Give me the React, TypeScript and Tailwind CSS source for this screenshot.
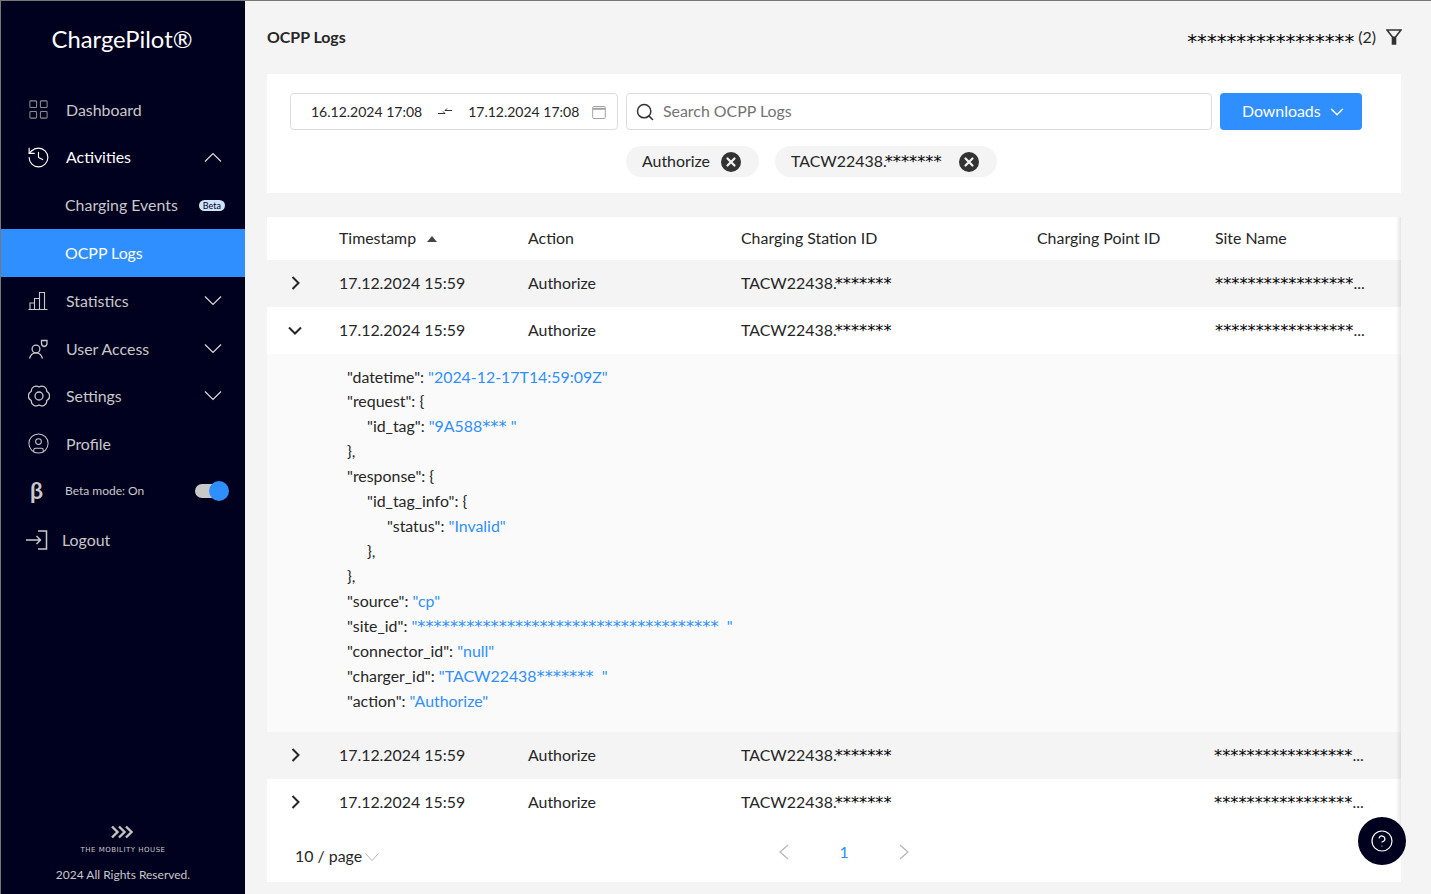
import { ChevronDown, CircleHelp, CircleUser, History, LayoutGrid, Search } from 'lucide-react';
import type { ReactNode } from 'react';

function Stars({ count, className }: { count: number; className?: string }) {
  return <span className={`text-[16.300px] leading-[0] text-black [font-family:'DejaVu_Sans',sans-serif] ${className ?? ''}`}>{'*'.repeat(count)}</span>;
}

function BlueStars({ count }: { count: number }) {
  return <span className="text-[16.300px] leading-[0] [font-family:'DejaVu_Sans',sans-serif]">{'*'.repeat(count)}</span>;
}

function MenuArrow({ up }: { up?: boolean }) {
  return (
    <svg viewBox="0 0 18 10" className="h-[10px] w-[18px]" fill="none" stroke="#dcdcdc" strokeWidth="1.200">
      <path d={up ? 'M1 9.500l8-8 8 8' : 'M1 .500l8 8 8-8'} />
    </svg>
  );
}

function PageArrow({ right }: { right?: boolean }) {
  return (
    <svg viewBox="0 0 10 16" className="h-4 w-[10px]" fill="none" stroke="#b5b5b5" strokeWidth="1.200">
      <path d={right ? 'M1 1l8 7-8 7' : 'M9 1L1 8l8 7'} />
    </svg>
  );
}

function RowArrow({ open }: { open?: boolean }) {
  return open ? (
    <svg viewBox="0 0 14 9" className="h-[9px] w-[14px]" fill="none" stroke="#262626" strokeWidth="2">
      <path d="M1 1.500l6 6 6-6" />
    </svg>
  ) : (
    <svg viewBox="0 0 9 14" className="h-[14px] w-[9px]" fill="none" stroke="#262626" strokeWidth="2">
      <path d="M1.500 1l6 6-6 6" />
    </svg>
  );
}

function BarsIcon() {
  return (
    <svg viewBox="0 0 20 20" className="size-5" fill="none" stroke="currentColor" strokeWidth="1.100">
      <path d="M0.500 18.500h19M2 18v-6h4.500M6.500 18V7.500h5V18M11.500 18V1.500h5V18" />
    </svg>
  );
}

function UserKeyIcon() {
  return (
    <svg viewBox="0 0 20 20" className="size-5" fill="none" stroke="currentColor" strokeWidth="1.300">
      <circle cx="8" cy="10" r="3.900" />
      <path d="M1.500 19.500c1-3.500 3.500-5.600 6.500-5.600s5.500 2.100 6.500 5.600" />
      <path d="M13.500 1.500h5.500v2.700c0 1.900-1.200 3-2.800 3.300-1.600-.3-2.700-1.400-2.700-3.300z" />
    </svg>
  );
}

function GearIcon() {
  return (
    <svg viewBox="0 0 22 22" className="size-[22px]" fill="none" stroke="currentColor" strokeWidth="1.300">
      <circle cx="11" cy="11" r="4" />
      <path d="M11 2A5 5 0 0 1 18.800 6.500A5 5 0 0 1 18.800 15.500A5 5 0 0 1 11 20A5 5 0 0 1 3.200 15.500A5 5 0 0 1 3.200 6.500A5 5 0 0 1 11 2z" />
    </svg>
  );
}

function LogoutIcon() {
  return (
    <svg viewBox="0 0 22 20" className="h-5 w-[22px]" fill="none" stroke="currentColor" strokeWidth="1.500">
      <path d="M12 1h8.500v18H12M0 10h14.500M10.500 6l4 4-4 4" />
    </svg>
  );
}

function CalendarIcon() {
  return (
    <svg viewBox="0 0 14 14" className="size-[14px]" fill="none" stroke="#a3a3a3" strokeWidth="1">
      <rect x="0.700" y="1.500" width="12.600" height="12" rx="1" />
      <path d="M0.700 3.800h12.600" strokeWidth="2" />
    </svg>
  );
}

function ClearIcon() {
  return (
    <svg viewBox="0 0 20 20" className="size-5">
      <circle cx="10" cy="10" r="10" fill="#333333" />
      <path d="M6.500 6.500l7 7M13.500 6.500l-7 7" stroke="#f4f4f4" strokeWidth="2.200" strokeLinecap="round" />
    </svg>
  );
}

function MenuItem({ icon, label, arrow, bright }: { icon: ReactNode; label: string; arrow?: 'up' | 'down'; bright?: boolean }) {
  return (
    <div className={`flex h-[47.600px] items-center pr-[23px] pl-[27px] ${bright ? 'text-white' : 'text-[#c9c9c9]'}`}>
      <span className="flex w-[38px] shrink-0 items-center">{icon}</span>
      <span className="flex-1 text-[15.900px]">{label}</span>
      {arrow && <MenuArrow up={arrow === 'up'} />}
    </div>
  );
}

function Sidebar() {
  return (
    <aside className="flex h-full w-[244px] shrink-0 flex-col bg-[#00001f]">
      <div className="flex h-[85px] items-center justify-center pr-[2px] pb-[8px] text-[23.800px] text-white">ChargePilot®</div>
      <nav className="flex flex-col">
        <MenuItem icon={<LayoutGrid className="ml-[-1px] size-[23px] text-[#8b8b8b]" strokeWidth={1.100} />} label="Dashboard" />
        <MenuItem icon={<History className="ml-[-2px] size-[25px]" strokeWidth={1.100} />} label="Activities" arrow="up" bright />
        <div className="flex h-[48px] items-center justify-between pr-5 pl-[64px] text-[#c9c9c9]">
          <span className="text-[15.900px]">Charging Events</span>
          <span className="rounded-full bg-[#cfe3fb] px-[4px] text-[9px] leading-[11px] text-[#00001f]">Beta</span>
        </div>
        <div className="flex h-[48px] items-center bg-[#308fff] pl-[64px] text-[15.900px] text-white">OCPP Logs</div>
        <MenuItem icon={<BarsIcon />} label="Statistics" arrow="down" />
        <MenuItem icon={<UserKeyIcon />} label="User Access" arrow="down" />
        <MenuItem icon={<GearIcon />} label="Settings" arrow="down" />
        <MenuItem icon={<CircleUser className="ml-[-1px] size-[23px]" strokeWidth={1.050} />} label="Profile" />
        <div className="flex h-[47.600px] items-center pr-[23px] pl-[29px] text-[#c9c9c9]">
          <span className="w-[35px] pb-[2px] text-[23px] font-bold">β</span>
          <span className="flex-1 text-xs">Beta mode: On</span>
          <div className="relative h-[14px] w-[27px] rounded-full bg-[#c9c9c9]">
            <div className="absolute top-[-3px] right-[-7px] size-5 rounded-full bg-[#308fff]" />
          </div>
        </div>
        <div className="flex h-[49px] items-center pl-[25px] text-[#c9c9c9]">
          <span className="mr-[14px] flex">
            <LogoutIcon />
          </span>
          <span className="text-[15.900px]">Logout</span>
        </div>
      </nav>
      <div className="mt-auto flex flex-col items-center pb-[11px] text-[#c9c9c9]">
        <svg viewBox="0 0 24 14" className="h-[14px] w-6" fill="none" stroke="#c4c4c4" strokeWidth="2.400">
          <path d="M1 1.500l5.500 5.500L1 12.500M8 1.500l5.500 5.500L8 12.500M15 1.500l5.500 5.500L15 12.500" />
        </svg>
        <div className="mt-[7px] text-[7px] leading-[9px] tracking-[0.500px] [font-family:'DejaVu_Sans',sans-serif]">THE MOBILITY HOUSE</div>
        <div className="mt-[12px] text-xs">2024 All Rights Reserved.</div>
      </div>
    </aside>
  );
}

function FilterCard() {
  return (
    <section className="bg-white pt-[19px] pr-[39px] pb-4 pl-[23px]">
      <div className="flex gap-2">
        <div className="flex h-[37px] w-[328px] items-center rounded border border-[#dcdcdc] pr-[11px] pl-5 text-sm">
          <span>16.12.2024 17:08</span>
          <svg viewBox="0 0 14 8" className="mx-4 h-2 w-[14px]" fill="none" stroke="#333333" strokeWidth="1">
            <path d="M0 5.500h7M5 3.500l2 2M7 2.500h7M9 .500l-2 2" />
          </svg>
          <span>17.12.2024 17:08</span>
          <span className="ml-auto">
            <CalendarIcon />
          </span>
        </div>
        <div className="flex h-[37px] flex-1 items-center rounded border border-[#dcdcdc] pl-2 text-[#737373]">
          <Search className="mr-[8px] size-[20px] text-[#333333]" strokeWidth={1.800} />
          <span className="pb-px text-[15.900px]">Search OCPP Logs</span>
        </div>
        <button className="flex h-[37px] w-[142px] items-center gap-[5px] rounded bg-[#308fff] pl-[22px] text-[15.900px] text-white">
          <span className="pb-px">Downloads</span>
          <ChevronDown className="size-[22px]" strokeWidth={1.700} />
        </button>
      </div>
      <div className="mt-[16px] ml-[336px] flex gap-4">
        <div className="flex h-[31px] w-[133px] items-center gap-[11px] rounded-full bg-[#f4f4f4] pl-4 text-[15.900px]">
          <span className="pb-px">Authorize</span>
          <ClearIcon />
        </div>
        <div className="flex h-[31px] w-[222px] items-center rounded-full bg-[#f4f4f4] pl-4 text-[15.900px]">
          <span className="pb-px">
            TACW22438.<Stars count={7} className="ml-[-2px]" />
          </span>
          <span className="ml-[17px]">
            <ClearIcon />
          </span>
        </div>
      </div>
    </section>
  );
}

const COLS = 'grid grid-cols-[72px_189px_213px_296px_178px_1fr] items-center pb-px text-[15.900px]';

function Row({ open, shaded, siteClass }: { open?: boolean; shaded?: boolean; siteClass?: string }) {
  return (
    <div className={`${COLS} h-[47px] ${shaded ? 'bg-[#f4f4f4]' : 'bg-white'}`}>
      <span className="flex w-14 justify-center">
        <RowArrow open={open} />
      </span>
      <span>17.12.2024 15:59</span>
      <span>Authorize</span>
      <span className="whitespace-nowrap">
        TACW22438.<Stars count={7} className="ml-[-2px]" />
      </span>
      <span />
      <div className={`whitespace-nowrap ${siteClass ?? ''}`}>
        <Stars count={17} />
        ...
      </div>
    </div>
  );
}

function Line({ indent, name, value, tail }: { indent?: 1 | 2; name?: string; value?: ReactNode; tail?: string }) {
  const pad = indent === 2 ? 'pl-10' : indent === 1 ? 'pl-5' : '';
  return (
    <div className={`h-[24.950px] leading-[25px] whitespace-pre ${pad}`}>
      {name && `"${name}": `}
      {value && <span className="text-[#308fff]">{value}</span>}
      {tail}
    </div>
  );
}

function LogDetail() {
  return (
    <div className="bg-[#fafafa] pt-[9.500px] pb-[19.200px] pl-20 text-[15.900px]">
      <Line name="datetime" value={'"2024-12-17T14:59:09Z"'} />
      <Line name="request" tail="{" />
      <Line indent={1} name="id_tag" value={<>"9A588<BlueStars count={3} /> "</>} />
      <Line tail="}," />
      <Line name="response" tail="{" />
      <Line indent={1} name="id_tag_info" tail="{" />
      <Line indent={2} name="status" value={'"Invalid"'} />
      <Line indent={1} tail="}," />
      <Line tail="}," />
      <Line name="source" value={'"cp"'} />
      <Line name="site_id" value={<>"<BlueStars count={37} />{'  '}"</>} />
      <Line name="connector_id" value={'"null"'} />
      <Line name="charger_id" value={<>"TACW22438<BlueStars count={7} />{'  '}"</>} />
      <Line name="action" value={'"Authorize"'} />
    </div>
  );
}

function LogsTable() {
  return (
    <section className="relative mt-6 flex flex-1 flex-col bg-white">
      <div className={`${COLS} h-[43px]`}>
        <span />
        <span className="flex items-center gap-[11px]">
          Timestamp
          <span className="mt-[2px] h-0 w-0 border-x-[5px] border-b-[6px] border-x-transparent border-b-[#444444]" />
        </span>
        <span>Action</span>
        <span>Charging Station ID</span>
        <span>Charging Point ID</span>
        <span>Site Name</span>
      </div>
      <Row shaded />
      <Row open />
      <LogDetail />
      <Row shaded siteClass="-ml-px" />
      <Row siteClass="-ml-px" />
      <div className="relative flex-1">
        <div className="absolute top-[18px] left-7 flex items-center text-[15.900px]">
          10 / page
          <svg viewBox="0 0 14 8" className="mt-[3px] ml-[3px] h-2 w-[14px]" fill="none" stroke="#b5b5b5" strokeWidth="1">
            <path d="M.500 .500L7 7.500 13.500 .500" />
          </svg>
        </div>
        <div className="flex items-center justify-center gap-[50px] pt-[14px] pl-[20px]">
          <PageArrow />
          <span className="text-[15.900px] text-[#308fff]">1</span>
          <PageArrow right />
        </div>
      </div>
      <div className="pointer-events-none absolute top-0 right-0 bottom-[56px] w-[5px] bg-gradient-to-l from-black/10 to-transparent" />
    </section>
  );
}

export default function App() {
  return (
    <div className="flex h-screen w-full overflow-hidden border-t border-l border-t-[#777777] border-l-[#777777] bg-[#f4f4f4] [font-family:Lato,sans-serif] text-[#262626]">
      <Sidebar />
      <main className="flex min-w-0 flex-1 flex-col pr-[30px] pb-3 pl-[22px]">
        <header className="flex h-[73px] items-center justify-between pb-[1px]">
          <h1 className="text-[15.900px] font-bold">OCPP Logs</h1>
          <div className="flex items-center gap-[10px]">
            <span className="text-[15.900px]">
              <span className="align-[-5px] text-[19.650px] leading-[0] text-black [font-family:'DejaVu_Sans',sans-serif]">{'*'.repeat(17)}</span>{' '}
              (2)
            </span>
            <svg viewBox="0 0 16 16" className="mr-[-1px] size-4" fill="none" stroke="#333333">
              <path d="M1 1h14L9.500 8v7h-3V8z" strokeWidth="1.600" />
              <path d="M7 8h2v6.500H7z" fill="#333333" />
            </svg>
          </div>
        </header>
        <FilterCard />
        <LogsTable />
      </main>
      <button className="fixed right-[25px] bottom-[29px] flex size-12 items-center justify-center rounded-full bg-[#00001f] text-white">
        <CircleHelp className="size-6" strokeWidth={1.200} />
      </button>
    </div>
  );
}
